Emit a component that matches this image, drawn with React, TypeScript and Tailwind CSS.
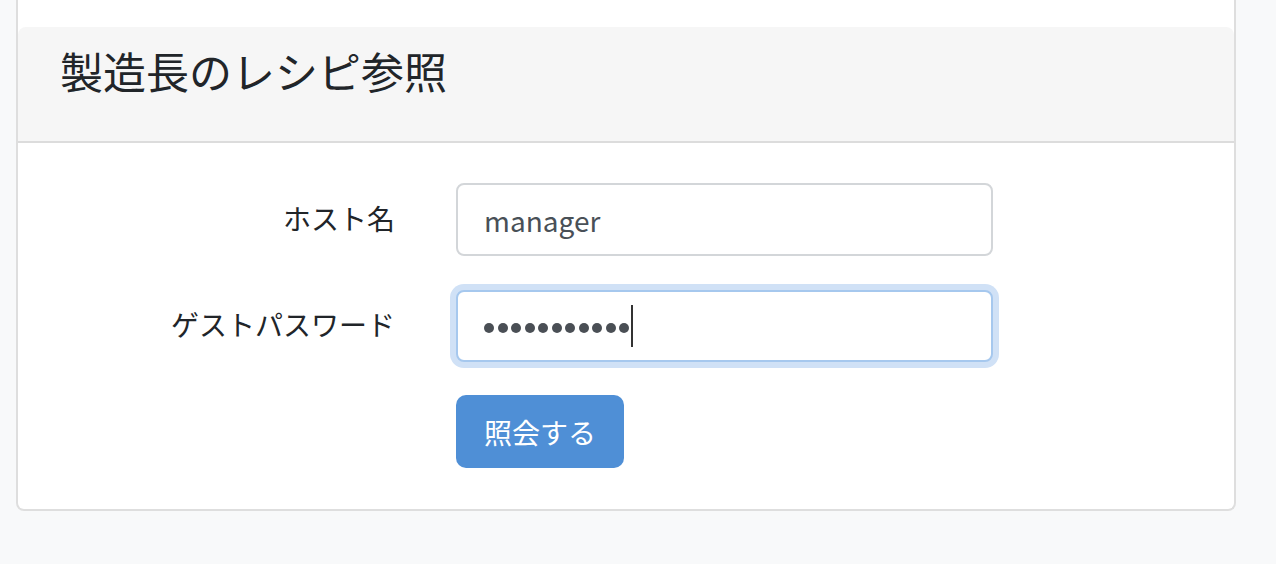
import React from 'react';

const font = { fontFamily: '"Noto Sans CJK JP", "Noto Sans", sans-serif' };

export default function App() {
  const dots = Array.from({ length: 11 });

  return (
    <div className="min-h-screen bg-[#f8f9fa] pl-[16px] pr-[40px]" style={font}>
      <div className="bg-white border-x-2 border-b-2 border-[#dedede] rounded-b-[8px] pt-[27px]">
        <div className="bg-[#f6f6f6] rounded-t-[8px] border-b-2 border-[#dcdcdc] pl-[42px] pt-[18px] h-[116px]">
          <h1 className="text-[43px] leading-[50px] text-[#212529] font-normal">製造長のレシピ参照</h1>
        </div>
        <div className="pt-[40px] pb-[41px]">
          <div className="flex items-center mb-[34px]">
            <label className="w-[377px] text-right text-[28px] text-[#212529] pb-[4px]">ホスト名</label>
            <input
              type="text"
              readOnly
              value="manager"
              className="ml-[61px] w-[537px] h-[73px] border-2 border-[#d3d6d9] rounded-[8px] px-[26px] text-[28px] text-[#495057] bg-white outline-none"
              style={font}
            />
          </div>
          <div className="flex items-center mb-[33px]">
            <label className="w-[377px] text-right text-[28px] text-[#212529] pb-[4px]">ゲストパスワード</label>
            <div className="ml-[61px] w-[537px] h-[72px] border-2 border-[#a6c8ee] rounded-[8px] px-[26px] bg-white flex items-center ring-[6px] ring-[#d0e1f6]">
              <div className="flex items-center gap-[3.5px] pt-[3px]">
                {dots.map((_, i) => (
                  <span key={i} className="w-[10px] h-[10px] rounded-full bg-[#4a4f55]" />
                ))}
              </div>
              <span className="w-[2px] h-[42px] bg-[#333] ml-[2px]" />
            </div>
          </div>
          <div className="pl-[438px]">
            <button className="w-[168px] h-[73px] rounded-[10px] bg-[#4f8fd6] text-white text-[28px]" style={font}>
              照会する
            </button>
          </div>
        </div>
      </div>
    </div>
  );
}
